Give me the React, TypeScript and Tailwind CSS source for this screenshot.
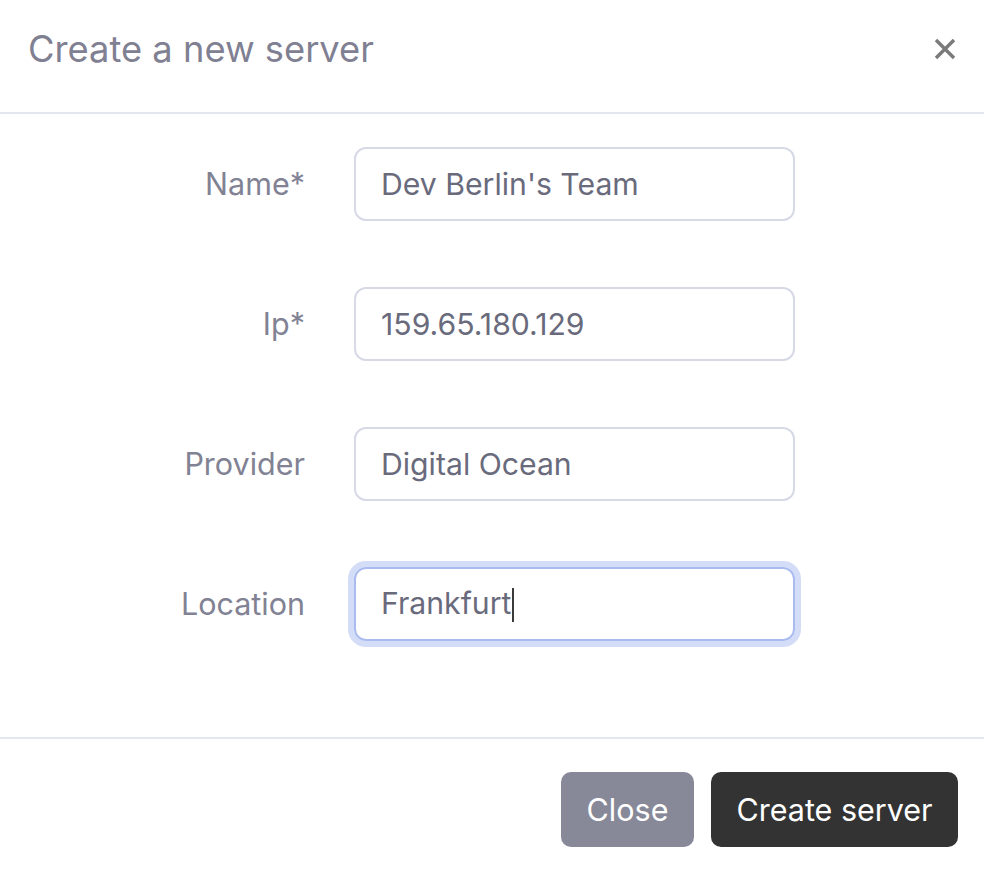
import { useState } from "react";

const fields = [
  { label: "Name*", value: "Dev Berlin's Team" },
  { label: "Ip*", value: "159.65.180.129" },
  { label: "Provider", value: "Digital Ocean" },
];

export default function App() {
  const [location] = useState("Frankfurt");

  return (
    <div className="w-[984px] h-[873px] bg-white overflow-hidden font-['Inter',sans-serif]">
      {/* Header */}
      <div className="h-[114px] flex items-center justify-between pl-[28px] pr-[28px] border-b-2 border-[#e3e6ef]">
        <h5 className="text-[36.3px] text-[#7f8092] -mt-[14px]">Create a new server</h5>
        <button className="text-[#7a7a7a] -mt-[14px]">
          <svg width="22" height="22" viewBox="0 0 22 22" fill="none" stroke="currentColor" strokeWidth="3.4" strokeLinecap="butt">
            <path d="M2 2L20 20M20 2L2 20" />
          </svg>
        </button>
      </div>

      {/* Body */}
      <div className="flex flex-col gap-[66px] pt-[33px] pb-[96px]">
        {fields.map((f) => (
          <div key={f.label} className="flex items-center">
            <label className="w-[305px] text-right text-[30.5px] text-[#818293]">{f.label}</label>
            <input
              readOnly
              value={f.value}
              className="ml-[49px] w-[441px] h-[74px] px-[25px] rounded-[12px] border-2 border-[#d8d9e6] text-[30.2px] text-[#696a7c] outline-none"
            />
          </div>
        ))}
        <div className="flex items-center">
          <label className="w-[305px] text-right text-[30.5px] text-[#818293]">Location</label>
          <div className="ml-[49px] w-[441px] h-[74px] px-[25px] rounded-[12px] border-2 border-[#aabbf0] ring-[6px] ring-[#d3ddf7] flex items-center">
            <span className="text-[30.2px] text-[#696a7c]">{location}</span>
            <span className="w-[2px] h-[34px] bg-[#3a3a3a] ml-[1px] mt-[2px]"></span>
          </div>
        </div>
      </div>

      {/* Footer */}
      <div className="border-t-2 border-[#e3e6ef] flex justify-end gap-[17px] pt-[33px] pr-[26px]">
        <button className="w-[133px] h-[75px] rounded-[10px] bg-[#878898] text-white text-[30.5px]">Close</button>
        <button className="w-[247px] h-[75px] rounded-[10px] bg-[#333333] text-white text-[30.5px]">Create server</button>
      </div>
    </div>
  );
}
